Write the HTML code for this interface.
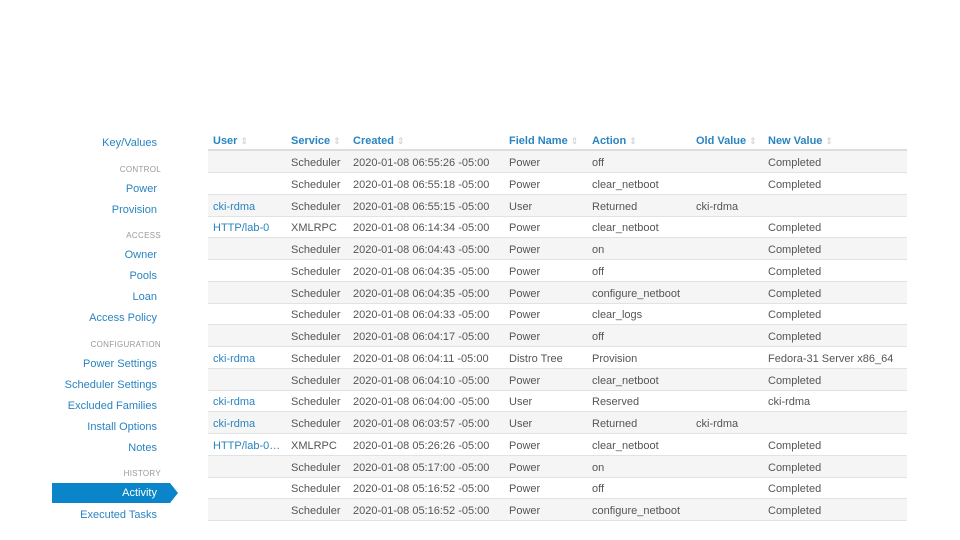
<!DOCTYPE html>
<html><head><meta charset="utf-8"><style>
body{margin:0;width:960px;height:540px;background:#fff;font-family:"Liberation Sans",sans-serif;position:relative;overflow:hidden}
.s{position:absolute;right:803px;font-size:11px;color:#2a84c0;white-space:nowrap;line-height:14px}
.h{position:absolute;right:799px;font-size:8px;color:#999;letter-spacing:.3px;line-height:10px}
.act{position:absolute;left:52px;top:483px;width:118px;height:20px;background:#0a85c9}
.act:after{content:"";position:absolute;left:118px;top:0;border-left:8px solid #0a85c9;border-top:10px solid transparent;border-bottom:10px solid transparent}
.act span{position:absolute;right:13px;top:4px;color:#fff;font-size:11px}
.r{position:absolute;left:208px;width:699px;height:21px;border-bottom:1px solid #e2e2e2;font-size:11px;color:#555}
.r.o{background:#f5f5f5}
.r span{position:absolute;top:6px;white-space:nowrap}
.l{color:#2a84c0}
.hd{position:absolute;left:208px;top:130px;width:699px;height:19px;border-bottom:2px solid #ddd;font-size:11px;font-weight:bold;color:#2a84c0}
.hd span{position:absolute;top:5px;white-space:nowrap}
.hd i{font-style:normal;color:#ccc;font-weight:normal;font-size:9px;margin-left:3px}
</style></head><body>
<div class="s" style="top:136px">Key/Values</div>
<div class="h" style="top:165px">CONTROL</div>
<div class="s" style="top:182px">Power</div>
<div class="s" style="top:203px">Provision</div>
<div class="h" style="top:231px">ACCESS</div>
<div class="s" style="top:248px">Owner</div>
<div class="s" style="top:269px">Pools</div>
<div class="s" style="top:290px">Loan</div>
<div class="s" style="top:311px">Access Policy</div>
<div class="h" style="top:340px">CONFIGURATION</div>
<div class="s" style="top:357px">Power Settings</div>
<div class="s" style="top:378px">Scheduler Settings</div>
<div class="s" style="top:399px">Excluded Families</div>
<div class="s" style="top:420px">Install Options</div>
<div class="s" style="top:441px">Notes</div>
<div class="h" style="top:469px">HISTORY</div>
<div class="act"><span>Activity</span></div>
<div class="s" style="top:508px">Executed Tasks</div>

<div class="hd">
<span style="left:5px">User<i>⇕</i></span>
<span style="left:83px">Service<i>⇕</i></span>
<span style="left:145px">Created<i>⇕</i></span>
<span style="left:301px">Field Name<i>⇕</i></span>
<span style="left:384px">Action<i>⇕</i></span>
<span style="left:488px">Old Value<i>⇕</i></span>
<span style="left:560px">New Value<i>⇕</i></span>
</div>
<div id="rows"></div>
<script>
var d=[
["","Scheduler","2020-01-08 06:55:26 -05:00","Power","off","","Completed"],
["","Scheduler","2020-01-08 06:55:18 -05:00","Power","clear_netboot","","Completed"],
["cki-rdma","Scheduler","2020-01-08 06:55:15 -05:00","User","Returned","cki-rdma",""],
["HTTP/lab-0","XMLRPC","2020-01-08 06:14:34 -05:00","Power","clear_netboot","","Completed"],
["","Scheduler","2020-01-08 06:04:43 -05:00","Power","on","","Completed"],
["","Scheduler","2020-01-08 06:04:35 -05:00","Power","off","","Completed"],
["","Scheduler","2020-01-08 06:04:35 -05:00","Power","configure_netboot","","Completed"],
["","Scheduler","2020-01-08 06:04:33 -05:00","Power","clear_logs","","Completed"],
["","Scheduler","2020-01-08 06:04:17 -05:00","Power","off","","Completed"],
["cki-rdma","Scheduler","2020-01-08 06:04:11 -05:00","Distro Tree","Provision","","Fedora-31 Server x86_64"],
["","Scheduler","2020-01-08 06:04:10 -05:00","Power","clear_netboot","","Completed"],
["cki-rdma","Scheduler","2020-01-08 06:04:00 -05:00","User","Reserved","","cki-rdma"],
["cki-rdma","Scheduler","2020-01-08 06:03:57 -05:00","User","Returned","cki-rdma",""],
["HTTP/lab-0…","XMLRPC","2020-01-08 05:26:26 -05:00","Power","clear_netboot","","Completed"],
["","Scheduler","2020-01-08 05:17:00 -05:00","Power","on","","Completed"],
["","Scheduler","2020-01-08 05:16:52 -05:00","Power","off","","Completed"],
["","Scheduler","2020-01-08 05:16:52 -05:00","Power","configure_netboot","","Completed"]];
var x=[5,83,145,301,384,488,560],h="";
d.forEach(function(r,i){h+='<div class="r'+(i%2==0?' o':'')+'" style="top:'+(151+i*21.75)+'px">';
r.forEach(function(c,j){h+='<span'+(j==0?' class="l"':'')+' style="left:'+x[j]+'px">'+c+'</span>';});h+='</div>';});
document.getElementById('rows').innerHTML=h;
</script>
</body></html>
